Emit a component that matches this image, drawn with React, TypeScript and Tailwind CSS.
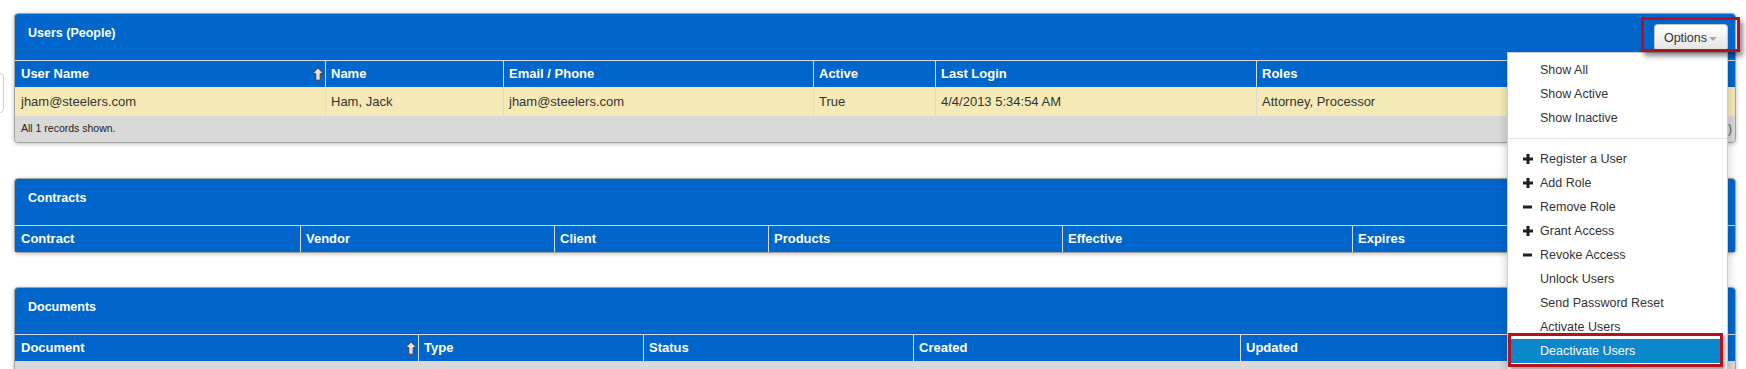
import type { ReactNode } from 'react'

type Item = { label?: string; icon?: 'plus' | 'minus'; divider?: boolean; active?: boolean }

const menuItems: Item[] = [
  { label: 'Show All' },
  { label: 'Show Active' },
  { label: 'Show Inactive' },
  { divider: true },
  { label: 'Register a User', icon: 'plus' },
  { label: 'Add Role', icon: 'plus' },
  { label: 'Remove Role', icon: 'minus' },
  { label: 'Grant Access', icon: 'plus' },
  { label: 'Revoke Access', icon: 'minus' },
  { label: 'Unlock Users' },
  { label: 'Send Password Reset' },
  { label: 'Activate Users' },
  { label: 'Deactivate Users', active: true },
]

function SortArrow() {
  return (
    <svg width="12" height="14" viewBox="0 0 12 14" className="mr-[1px] shrink-0">
      <path d="M6 0.8 L11.2 6.6 H8.2 V13.2 H3.8 V6.6 H0.8 Z" fill="#e2e2e2" stroke="#4f3f36" strokeWidth="1" />
    </svg>
  )
}

function MenuIcon({ kind }: { kind?: 'plus' | 'minus' }) {
  if (!kind) return <span className="w-[17px] shrink-0" />
  return (
    <span className="flex w-[17px] shrink-0 items-center">
      <svg width="10" height="10" viewBox="0 0 10 10">
        <rect x="0" y="3.5" width={kind === 'plus' ? 10 : 9} height="3" fill="#1f1f1f" />
        {kind === 'plus' && <rect x="3.5" y="0" width="3" height="10" fill="#1f1f1f" />}
      </svg>
    </span>
  )
}

function OptionsMenu() {
  return (
    <div className="absolute right-0 top-[28px] z-20 w-[221px] border border-black/20 bg-white pb-[6px] pt-[5px] shadow-[0_5px_10px_rgba(0,0,0,0.2)]">
      {menuItems.map((it, i) =>
        it.divider ? (
          <div key={i} className="my-[8px] h-px bg-[#e5e5e5]" />
        ) : (
          <div
            key={i}
            className={
              it.active
                ? 'mr-[4px] flex h-[24px] items-center bg-[#0a88cb] pl-[15px] text-[12.5px] text-white'
                : 'flex h-[24px] items-center pl-[15px] text-[12.5px] text-[#333]'
            }
          >
            <MenuIcon kind={it.icon} />
            {it.label}
          </div>
        )
      )}
    </div>
  )
}

function OptionsButton({ menu }: { menu?: boolean }) {
  return (
    <div className="relative mr-[7px] mt-[10px]">
      <button className="flex h-[27px] items-start rounded-[4px] border border-[#c4c4c4] border-b-[#a9a9a9] bg-linear-to-b from-white to-[#e4e4e4] pl-[9px] pr-[10px] pt-[5px] text-[12.5px] leading-[16px] text-[#333]">
        Options
        <span className="ml-[2px] mt-[7px] h-0 w-0 border-x-[4px] border-t-[4px] border-x-transparent border-t-[#aaa]" />
      </button>
      {menu && <OptionsMenu />}
    </div>
  )
}

function Panel({
  title,
  grid,
  cols,
  sortFirst,
  menu,
  children,
}: {
  title: string
  grid: string
  cols: string[]
  sortFirst?: boolean
  menu?: boolean
  children?: ReactNode
}) {
  return (
    <div className="rounded-[4px] border border-[#a3a3a3] bg-[#d9d9d9] shadow-[0_1px_4px_rgba(0,0,0,0.25)]">
      <div className="flex h-[46px] items-start justify-between rounded-t-[3px] bg-[#0066cc]">
        <div className="pl-[13px] pt-[11px] text-[12.5px] font-bold leading-[16px] text-white">{title}</div>
        <OptionsButton menu={menu} />
      </div>
      <div className={`h-[27px] border-t border-[#d3dbe8] bg-[#0066cc] ${grid}`}>
        {cols.map((c, i) => (
          <div
            key={c}
            className={
              i === 0
                ? 'flex items-center justify-between pl-[6px] text-[13px] font-bold text-white'
                : 'flex items-center border-l border-[#d3dbe8] pl-[5px] text-[13px] font-bold text-white'
            }
          >
            {c}
            {i === 0 && sortFirst && <SortArrow />}
          </div>
        ))}
      </div>
      {children}
    </div>
  )
}

export default function App() {
  const row = ['jham@steelers.com', 'Ham, Jack', 'jham@steelers.com', 'True', '4/4/2013 5:34:54 AM', 'Attorney, Processor']

  return (
    <div className="relative h-[369px] overflow-hidden bg-white font-['Liberation_Sans',Arial,sans-serif]">
      {/* sidebar tab peeking in from the left */}
      <div className="absolute left-[-20px] top-[73px] flex h-[40px] w-[24px] flex-col items-end justify-center gap-[3px] rounded-[4px] border border-[#cfcfcf] bg-white pr-[3px]">
        <span className="h-[2px] w-[1px] bg-[#aaa]" />
        <span className="h-[2px] w-[1px] bg-[#aaa]" />
      </div>

      <div className="flex flex-col pl-[14px] pr-[10px] pt-[13px]">
        <Panel
          title="Users (People)"
          grid="grid grid-cols-[310px_178px_310px_122px_321px_1fr]"
          cols={['User Name', 'Name', 'Email / Phone', 'Active', 'Last Login', 'Roles']}
          sortFirst
          menu
        >
          <div className="grid h-[29px] grid-cols-[310px_178px_310px_122px_321px_1fr] bg-[#f5eab6]">
            {row.map((v, i) => (
              <div
                key={i}
                className={
                  i === 0
                    ? 'flex items-center pl-[6px] text-[13px] text-[#333]'
                    : 'flex items-center border-l border-[#dcdcd6] pl-[5px] text-[13px] text-[#333]'
                }
              >
                {v}
              </div>
            ))}
          </div>
          <div className="flex h-[26px] items-center justify-between rounded-b-[3px] bg-[#d9d9d9] pl-[6px] pr-[3px] text-[10.5px] text-[#222]">
            <span>All 1 records shown.</span>
            <span className="text-[12px] text-[#555]">(1)</span>
          </div>
        </Panel>

        <div className="mt-[35px]">
          <Panel
            title="Contracts"
            grid="grid grid-cols-[285px_254px_214px_294px_290px_1fr]"
            cols={['Contract', 'Vendor', 'Client', 'Products', 'Effective', 'Expires']}
          />
        </div>

        <div className="mt-[34px]">
          <Panel
            title="Documents"
            grid="grid grid-cols-[403px_225px_270px_327px_1fr]"
            cols={['Document', 'Type', 'Status', 'Created', 'Updated']}
            sortFirst
          >
            <div className="h-[40px] bg-[#d9d9d9]" />
          </Panel>
        </div>
      </div>

      {/* red annotation boxes */}
      <div className="absolute left-[1641px] top-[17px] z-30 h-[35px] w-[99px] border-[3px] border-[#b3111b] shadow-[3px_4px_5px_rgba(0,0,0,0.45)]" />
      <div className="absolute left-[1508px] top-[333px] z-30 h-[34px] w-[215px] border-[3px] border-[#b3111b] shadow-[2px_3px_4px_rgba(0,0,0,0.4)]" />
    </div>
  )
}
